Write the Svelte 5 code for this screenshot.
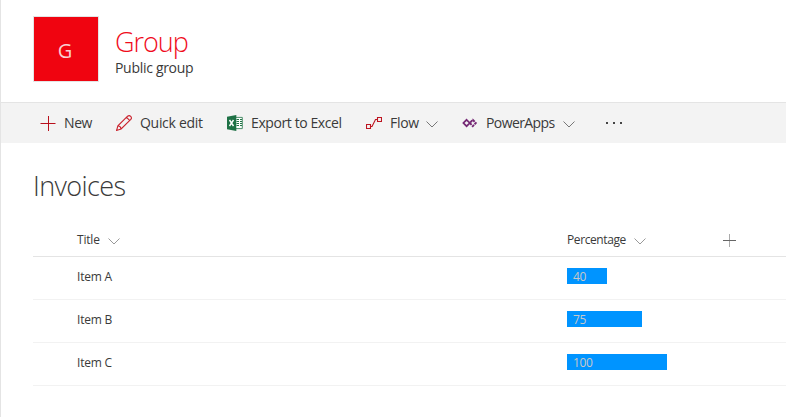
<script>
  const rows = [
    { title: 'Item A', value: 40 },
    { title: 'Item B', value: 75 },
    { title: 'Item C', value: 100 }
  ];
</script>

{#snippet chevron()}
  <svg class="chevron" width="12" height="7" viewBox="0 0 12 7"><path d="M.5.5 6 6 11.5.5" /></svg>
{/snippet}

<div class="page">
  <header>
    <div class="logo"><span>G</span></div>
    <div class="identity">
      <h1>Group</h1>
      <p>Public group</p>
    </div>
  </header>

  <nav>
    <button class="new">
      <svg width="16" height="16" viewBox="0 0 16 16" stroke="#b9101c"><path d="M.5 8.5h15M8.5 1v15" /></svg>
      <span>New</span>
    </button>
    <button class="edit">
      <svg width="16" height="16" viewBox="0 0 16 16" stroke="#c9202b" stroke-width="1.1"><path d="M.6 15.4 1.9 10.8 11.6 1.2Q13.2 0 14.7 1.3 16.1 2.8 14.8 4.4L5.1 13.9ZM1.9 10.8Q4.6 11.2 5.1 13.9M10.6 2.4l3 3" /></svg>
      <span>Quick edit</span>
    </button>
    <button class="excel">
      <svg width="16" height="16" viewBox="0 0 16 16">
        <path fill="#fff" stroke="#217346" stroke-width=".8" d="M8 2.4h7.3v11.2H8z" />
        <path stroke="#217346" d="M9.5 4.5H12M13 4.5h2M9.5 6.5H12M13 6.5h2M9.5 8.5H12M13 8.5h2M9.5 10.5H12M13 10.5h2" />
        <path fill="#1e7145" d="M0 1.8 9.3 0v16L0 14.2z" />
        <path stroke="#fff" stroke-width="1.4" d="m2.5 5 4 6M6.5 5l-4 6" />
      </svg>
      <span>Export to Excel</span>
    </button>
    <button class="flow">
      <svg width="16" height="16" viewBox="0 0 16 16" stroke="#bd1420" stroke-width="1.1"><path d="M.5 9.5h4v4h-4zM11.5 2.5h4v4h-4zM4.5 11.5H6L9.5 4.5h2" /></svg>
      <span>Flow</span>
      {@render chevron()}
    </button>
    <button class="apps">
      <svg width="16" height="16" viewBox="0 0 16 16">
        <path stroke="#742774" stroke-width="1.7" d="M4.6 4.8 7.8 8l-3.2 3.2L1.4 8z" />
        <path stroke="#742774" stroke-width="1.9" stroke-dasharray="2.7 .8" d="M10.8 4.8 13.8 8l-3 3.2L7.8 8z" />
      </svg>
      <span>PowerApps</span>
      {@render chevron()}
    </button>
    <button class="more" aria-label="More">
      <svg width="18" height="4" viewBox="0 0 18 4"><path fill="#444" d="M1 1h2v2H1zM8 1h2v2H8zM15 1h2v2h-2z" /></svg>
    </button>
  </nav>

  <main>
    <h2>Invoices</h2>
    <div class="list">
      <div class="row head">
        <div class="title"><span class="t">Title</span>{@render chevron()}</div>
        <div class="percent"><span class="p">Percentage</span>{@render chevron()}</div>
        <svg class="add" width="13" height="13" viewBox="0 0 13 13"><path stroke="#aaa" d="M6.5 0v13" /><path stroke="#666" d="M0 6.5h13" /></svg>
      </div>
      {#each rows as row}
        <div class="row">
          <div class="title"><span class="item">{row.title}</span></div>
          <div class="bar" style="width: {row.value}px"><span>{row.value}</span></div>
        </div>
      {/each}
    </div>
  </main>
</div>

<style>
  :global(body) { background: #fff; }
  .page {
    box-sizing: border-box;
    width: 786px;
    height: 417px;
    overflow: hidden;
    border-left: 1px solid #e4e4e4;
    font-family: "Open Sans", "Noto Sans", sans-serif;
    color: #3a3a3a;
    white-space: nowrap;
  }
  svg { display: block; flex: none; fill: none; }
  header {
    box-sizing: border-box;
    display: flex;
    height: 102px;
    padding: 16px 0 0 32px;
  }
  .logo {
    box-sizing: border-box;
    width: 66px;
    height: 66px;
    border: 1px solid #e4e4e4;
    background: #f00410;
    color: #f9cfd0;
    display: flex;
    align-items: center;
    justify-content: center;
    font-size: 20px;
    padding: 2px 2px 0 0;
  }
  .identity { padding: 12px 0 0 16px; }
  h1, h2, p { margin: 0; }
  h1 {
    font-size: 27px;
    line-height: 28px;
    font-weight: 300;
    color: #f00c1c;
    letter-spacing: -1px;
  }
  p { padding-top: 3px; font-size: 14px; line-height: 18px; letter-spacing: -.3px; }
  nav {
    box-sizing: border-box;
    height: 41px;
    border-top: 1px solid #e4e4e4;
    background: #f3f3f3;
    display: flex;
    align-items: center;
    padding-left: 39px;
  }
  button {
    box-sizing: border-box;
    height: 40px;
    flex: none;
    display: flex;
    align-items: center;
    gap: 8px;
    padding: 0;
    border: 0;
    background: none;
    color: #3a3a3a;
    font: 14px/20px "Open Sans", "Noto Sans", sans-serif;
    text-align: left;
  }
  .new { width: 76px; }
  .new span { letter-spacing: -.4px; }
  .edit { width: 111px; }
  .excel { width: 139px; }
  .flow { width: 96px; }
  .flow span { width: 28px; letter-spacing: -.3px; }
  .apps { width: 143px; }
  .apps span { width: 69px; }
  .edit span { letter-spacing: -.3px; }
  .excel span { letter-spacing: -.4px; }
  .apps span { letter-spacing: -.6px; }
  .chevron { stroke: #777; margin-top: 3px; }
  main { padding-left: 32px; }
  h2 {
    padding-top: 26px;
    font-size: 27px;
    line-height: 34px;
    font-weight: 300;
    letter-spacing: -.6px;
  }
  .list { padding-top: 20px; }
  .row {
    box-sizing: border-box;
    height: 43px;
    display: flex;
    padding-left: 44px;
    border-bottom: 1px solid #f2f2f2;
    font-size: 12px;
    line-height: 16px;
  }
  .head { height: 34px; border-color: #e4e4e4; padding-top: 9px; }
  .head .chevron { stroke: #999; margin-top: 6px; }
  .add { margin-top: 2px; }
  .title { width: 490px; display: flex; }
  .t { width: 31px; letter-spacing: -.2px; }
  .percent { width: 156px; display: flex; }
  .p { width: 67px; letter-spacing: -.4px; }
  .item { padding-top: 12px; letter-spacing: -.2px; }
  .bar {
    box-sizing: border-box;
    height: 16px;
    margin-top: 11px;
    padding: 1px 0 0 6px;
    background: #0094ff;
    color: #c8c8c8;
  }
  .bar span { letter-spacing: -.3px; }
</style>
